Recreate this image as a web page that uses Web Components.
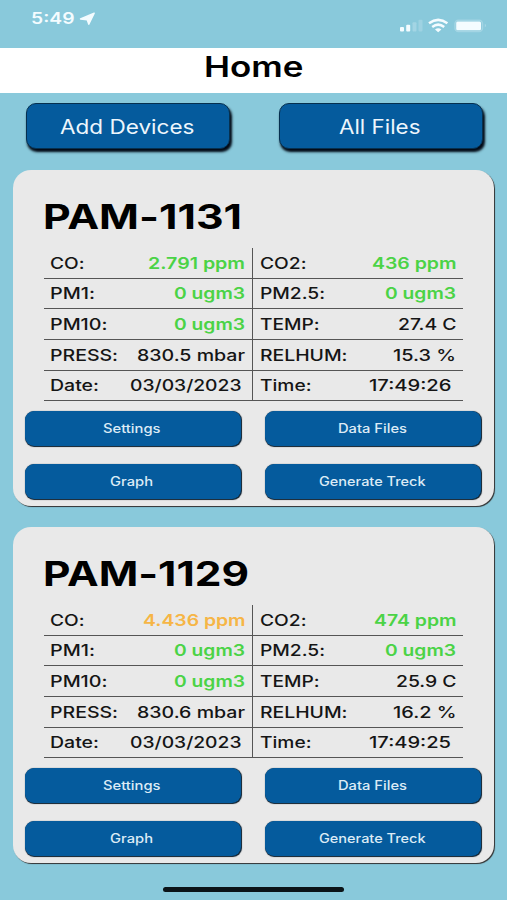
<!DOCTYPE html>
<html lang="en">
<head>
<meta charset="utf-8">
<title>Home</title>
<style>
  body {
    margin: 0;
    background: #89c9db;
    font-family: Inter, "Liberation Sans", sans-serif;
  }
</style>
</head>
<body>
<home-screen></home-screen>

<script>
// One line of text, widened or narrowed to the "width" attribute
class FitText extends HTMLElement {
  constructor() {
    super();
    this.attachShadow({ mode: "open" });
    this.shadowRoot.innerHTML = `
      <style>
        :host { display: inline-block; white-space: nowrap; }
        span { display: inline-block; transform-origin: 0 50%; }
      </style>
      <span><slot></slot></span>
    `;
  }

  connectedCallback() {
    const span = this.shadowRoot.querySelector("span");
    const width = parseFloat(this.getAttribute("width"));
    const natural = span.getBoundingClientRect().width;
    this.style.width = `${width}px`;
    if (natural) span.style.transform = `scaleX(${width / natural})`;
  }
}

class StatusBar extends HTMLElement {
  constructor() {
    super();
    this.attachShadow({ mode: "open" });
    this.shadowRoot.innerHTML = `
      <style>
        :host {
          display: flex;
          justify-content: space-between;
          box-sizing: border-box;
          height: 48.3px;
          padding: 9px 20px 0 31px;
          color: #f4fcff;
          font-size: 15.5px;
          font-weight: 600;
          line-height: 20px;
        }
        .left { display: flex; gap: 4px; }
        .left svg { margin-top: 3px; }
        .right { display: block; margin-top: 9px; }
      </style>
      <div class="left">
        <fit-text width="43.5">5:49</fit-text>
        <svg width="17" height="14" viewBox="0 0 17 14"><path fill="currentColor" stroke="currentColor" stroke-width="1.4" stroke-linejoin="round" d="M15.2 1.2 1.5 7 8.200 7.800 9.800 12.300z"/></svg>
      </div>
      <svg class="right" width="88" height="16" viewBox="0 0 88 16">
        <g fill="currentColor">
          <rect x="1" y="9" width="4" height="4.5" rx="1"/>
          <rect x="7.2" y="6.8" width="4" height="6.7" rx="1"/>
          <rect x="13.5" y="4.3" width="4" height="9.2" rx="1" opacity=".25"/>
          <rect x="19.5" y="1.8" width="4" height="11.7" rx="1" opacity=".2"/>
        </g>
        <g fill="none" stroke="currentColor" stroke-width="2.5">
          <path d="M30 5.3q9.2-6.8 18.4 0"/>
          <path d="M33.2 8.9q6-4.5 12 0"/>
        </g>
        <path fill="currentColor" d="M36 11.4q3.2-2.3 6.4 0l-3.2 2.8z"/>
        <rect x="56" y="2.2" width="27.5" height="11.2" rx="3.5" fill="none" stroke="currentColor" stroke-width="1.5" opacity=".25"/>
        <rect x="57.2" y="3.5" width="24.8" height="8.7" rx="1.5" fill="currentColor"/>
        <path fill="currentColor" opacity=".35" d="M85.8 5.8q2 1.7 0 3.6z"/>
      </svg>
    `;
  }
}

class AppButton extends HTMLElement {
  constructor() {
    super();
    this.attachShadow({ mode: "open" });
    this.shadowRoot.innerHTML = `
      <style>
        :host {
          display: flex;
          align-items: center;
          justify-content: center;
          box-sizing: border-box;
          height: 35px;
          border-radius: 9px;
          background: #055b9d;
          box-shadow: 0.5px 0.5px 0.8px #10212f;
          color: #dcebf6;
          font-size: 12.5px;
          font-weight: 500;
          line-height: 16px;
          padding-right: 2px;
        }
        :host([large]) {
          height: 46px;
          border: 1px solid #06304f;
          border-radius: 10px;
          box-shadow: 1.5px 3px 2.5px #000814;
          color: #edf6fc;
          font-size: 19.5px;
          font-weight: 400;
          line-height: 24px;
          padding: 2px 2px 0 0;
        }
      </style>
      <fit-text width="${this.getAttribute("text-width")}"><slot></slot></fit-text>
    `;
  }
}

class SensorReading extends HTMLElement {
  constructor() {
    super();
    this.attachShadow({ mode: "open" });
    const [labelWidth, valueWidth] = this.getAttribute("widths").split(" ");
    this.shadowRoot.innerHTML = `
      <style>
        :host {
          display: flex;
          justify-content: space-between;
          box-sizing: border-box;
          height: 30.7px;
          padding: 5.5px 8px 0 6px;
          border-bottom: 1px solid #555;
          color: #151515;
          font-size: 15.8px;
          font-weight: 500;
          line-height: 20px;
        }
        :host(:nth-child(-n+2)) { padding-top: 6px; }
        :host(:nth-child(even)) { padding-left: 7px; padding-right: 7px; }
        :host([clock]) { padding-right: 12px; }
        /* keeps the colon on the baseline after a digit */
        .label { font-feature-settings: "calt" 0; }
        .value { color: var(--value-color, #151515); }
        :host([level]) .value { font-weight: 600; }
        :host([level="good"]) { --value-color: #4bd346; }
        :host([level="fair"]) { --value-color: #f6b545; }
      </style>
      <fit-text class="label" width="${labelWidth}">${this.getAttribute("label")}</fit-text>
      <fit-text class="value" width="${valueWidth}"><slot></slot></fit-text>
    `;
  }
}

class DeviceCard extends HTMLElement {
  constructor() {
    super();
    this.attachShadow({ mode: "open" });
    this.shadowRoot.innerHTML = `
      <style>
        :host {
          display: block;
          box-sizing: border-box;
          height: 335.5px;
          padding: 24px 13px 0 11.5px;
          border-radius: 18px;
          background: #e9e9e9;
          box-shadow: 1px 1px 0.8px #333;
        }
        h2 {
          margin: 0 0 7.5px 18.7px;
          height: 46px;
          color: #000;
          font-size: 34px;
          font-weight: 700;
          font-feature-settings: "calt" 0;
          line-height: 46px;
        }
        .readings {
          display: grid;
          grid-template-columns: 209px 210px;
          width: 419px;
          margin: 0 0 10px 19.5px;
          background: linear-gradient(#555, #555) 208px 0 / 1px 100% no-repeat;
        }
        .actions {
          display: grid;
          grid-template-columns: 216px 216px;
          justify-content: space-between;
          row-gap: 17.6px;
        }
      </style>
      <h2><fit-text width="${this.getAttribute("name-width")}">${this.getAttribute("name")}</fit-text></h2>
      <div class="readings"><slot></slot></div>
      <div class="actions">
        <app-button text-width="57.5">Settings</app-button>
        <app-button text-width="69">Data Files</app-button>
        <app-button text-width="43">Graph</app-button>
        <app-button text-width="106.5">Generate Treck</app-button>
      </div>
    `;
  }
}

class HomeScreen extends HTMLElement {
  constructor() {
    super();
    this.attachShadow({ mode: "open" });
    this.shadowRoot.innerHTML = `
      <style>
        :host {
          display: flex;
          flex-direction: column;
          width: 507px;
          height: 900px;
          overflow: hidden;
        }
        header {
          display: flex;
          justify-content: center;
          height: 45px;
          background: #fff;
        }
        h1 {
          margin: 0;
          font-size: 28px;
          font-weight: 600;
          line-height: 38px;
        }
        nav {
          display: flex;
          justify-content: space-between;
          padding: 10px 24.5px 0 26px;
          margin-bottom: 21.2px;
        }
        nav app-button { width: 204px; }
        main {
          display: flex;
          flex-direction: column;
          gap: 21.5px;
          padding: 0 13px;
        }
        .home-indicator {
          width: 181px;
          height: 5px;
          margin: 24px auto 0;
          border-radius: 3px;
          background: #0b1418;
        }
      </style>
      <status-bar></status-bar>
      <header><h1><fit-text width="99.5">Home</fit-text></h1></header>
      <nav>
        <app-button large text-width="134.5">Add Devices</app-button>
        <app-button large text-width="81.5">All Files</app-button>
      </nav>
      <main>
        <device-card name="PAM-1131" name-width="199">
          <sensor-reading label="CO:" widths="34.5 97" level="good">2.791 ppm</sensor-reading>
          <sensor-reading label="CO2:" widths="46.5 84.5" level="good">436 ppm</sensor-reading>
          <sensor-reading label="PM1:" widths="45 71" level="good">0 ugm3</sensor-reading>
          <sensor-reading label="PM2.5:" widths="65 71" level="good">0 ugm3</sensor-reading>
          <sensor-reading label="PM10:" widths="57.5 71" level="good">0 ugm3</sensor-reading>
          <sensor-reading label="TEMP:" widths="59.5 58.5">27.4 C</sensor-reading>
          <sensor-reading label="PRESS:" widths="68 108">830.5 mbar</sensor-reading>
          <sensor-reading label="RELHUM:" widths="87.5 63">15.3 %</sensor-reading>
          <sensor-reading label="Date:" widths="49 111.5" clock>03/03/2023</sensor-reading>
          <sensor-reading label="Time:" widths="51.5 82.5" clock>17:49:26</sensor-reading>
        </device-card>
        <device-card name="PAM-1129" name-width="206">
          <sensor-reading label="CO:" widths="34.5 102.5" level="fair">4.436 ppm</sensor-reading>
          <sensor-reading label="CO2:" widths="46.5 82.5" level="good">474 ppm</sensor-reading>
          <sensor-reading label="PM1:" widths="45 71" level="good">0 ugm3</sensor-reading>
          <sensor-reading label="PM2.5:" widths="65 71" level="good">0 ugm3</sensor-reading>
          <sensor-reading label="PM10:" widths="57.5 71" level="good">0 ugm3</sensor-reading>
          <sensor-reading label="TEMP:" widths="59.5 60.5">25.9 C</sensor-reading>
          <sensor-reading label="PRESS:" widths="68 108">830.6 mbar</sensor-reading>
          <sensor-reading label="RELHUM:" widths="87.5 63.5">16.2 %</sensor-reading>
          <sensor-reading label="Date:" widths="49 111.5" clock>03/03/2023</sensor-reading>
          <sensor-reading label="Time:" widths="51.5 82" clock>17:49:25</sensor-reading>
        </device-card>
      </main>
      <div class="home-indicator"></div>
    `;
  }
}

// home-screen goes first so its children are in the page when they upgrade;
// fit-text goes last so it measures a finished layout
customElements.define("home-screen", HomeScreen);
customElements.define("status-bar", StatusBar);
customElements.define("device-card", DeviceCard);
customElements.define("app-button", AppButton);
customElements.define("sensor-reading", SensorReading);
customElements.define("fit-text", FitText);
</script>
</body>
</html>
